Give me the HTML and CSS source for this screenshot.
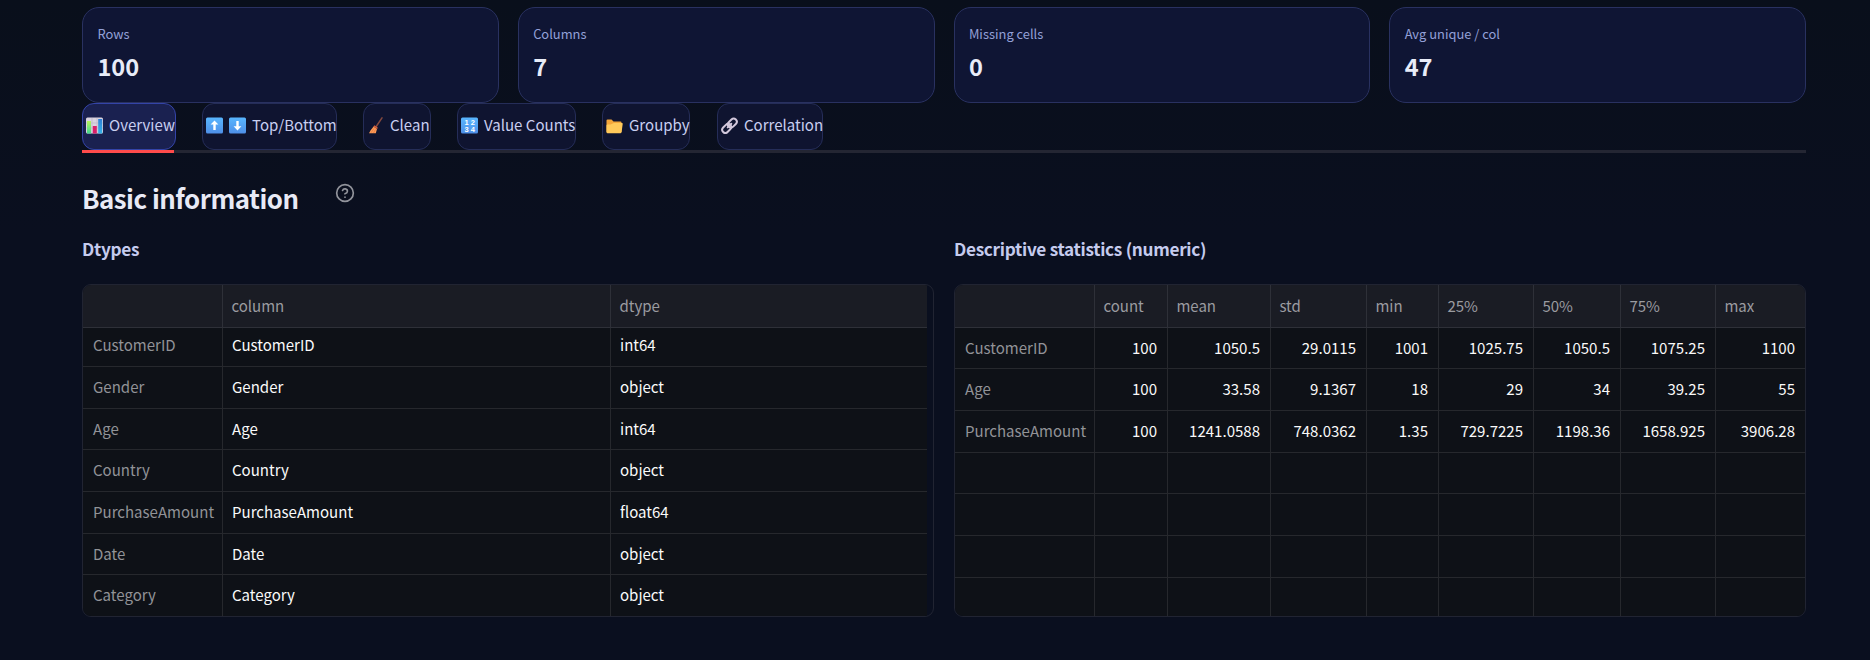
FILE: index.html
```html
<!DOCTYPE html>
<html lang="en">
<head>
<meta charset="utf-8">
<title>Data overview</title>
<link rel="stylesheet" href="styles.css">
</head>
<body>
<main class="page">
  <section class="metrics">
    <div class="metric"><div class="metric-label">Rows</div><div class="metric-value">100</div></div>
    <div class="metric"><div class="metric-label">Columns</div><div class="metric-value">7</div></div>
    <div class="metric"><div class="metric-label">Missing cells</div><div class="metric-value">0</div></div>
    <div class="metric"><div class="metric-label">Avg unique / col</div><div class="metric-value">47</div></div>
  </section>

  <nav class="tabs">
    <div class="tab active w-overview">
      <svg class="emoji" viewBox="0 0 17 17"><defs><linearGradient id="g" x2="0" y2="1"><stop stop-color="#b8f25a"/><stop offset="1" stop-color="#3fd98f"/></linearGradient><linearGradient id="b" x2="0" y2="1"><stop stop-color="#2f7fd6"/><stop offset="1" stop-color="#35b4ea"/></linearGradient><linearGradient id="k" x2="0" y2="1"><stop stop-color="#58b6ff"/><stop offset="1" stop-color="#4f8fe8"/></linearGradient></defs><rect y=".5" width="17" height="16" rx="1.5" fill="#d9d3e0"/><path d="M0 6h17M0 11h17M6 1v15M11 1v15" stroke="#b9b2c4" stroke-width=".6"/><rect x="1" y="4" width="4" height="12.5" fill="url(#g)"/><rect x="6.8" y="9" width="4" height="7.5" fill="#d91e68"/><rect x="12.2" y="2" width="4" height="14.5" fill="url(#b)"/></svg>
      <span>Overview</span></div>
    <div class="tab w-top">
      <svg class="emoji" viewBox="0 0 17 17"><rect y=".5" width="17" height="16" rx="1.5" fill="url(#k)"/><path d="M8.5 3.4 12.4 7.6H9.7V13H7.3V7.6H4.6z" fill="#fff"/></svg>
      <svg class="emoji second" viewBox="0 0 17 17"><rect y=".5" width="17" height="16" rx="1.5" fill="url(#k)"/><path d="M8.5 13.5 12.4 9.3H9.7V4H7.3V9.3H4.6z" fill="#fff"/></svg>
      <span>Top/Bottom</span></div>
    <div class="tab w-clean">
      <svg class="emoji" viewBox="0 0 17 17"><path d="M15 .8 9.200 9.500" stroke="#84493f" stroke-width="1.500" stroke-linecap="round"/><path d="M6.600 9.500 10 11.900 8.800 16.300 2 16.200 3.500 13.500z" fill="#ff9a55"/><path d="M4 15.800 7 11.500M6.500 16 8.500 12.500" stroke="#d9703f" stroke-width=".6"/><path d="M7.500 8.300 10.900 10.700 10.100 12 6.400 9.600z" fill="#d9603c"/></svg>
      <span>Clean</span></div>
    <div class="tab w-value">
      <svg class="emoji" viewBox="0 0 17 17"><rect y=".5" width="17" height="16" rx="1.5" fill="url(#k)"/><g class="digits"><text x="3.4" y="7.6">1</text><text x="9.8" y="7.6">2</text><text x="3.4" y="14.8">3</text><text x="9.8" y="14.8">4</text></g></svg>
      <span>Value Counts</span></div>
    <div class="tab w-group">
      <svg class="emoji" viewBox="0 0 17 17"><path d="M.5 3.5Q.5 2.5 1.5 2.5H5.5L7.5 4.500H14.500Q15.500 4.500 15.500 5.500V15H.5z" fill="#f3a63a"/><path d="M4.500 7.500 8 6H16Q16.900 6 16.700 7L15.600 15Q15.400 16.200 14.200 16.200H1.500Q.4 16.200.5 15V8.500Q.5 7.500 1.500 7.500z" fill="#ffc95a"/></svg>
      <span>Groupby</span></div>
    <div class="tab w-corr">
      <svg class="emoji" viewBox="0 0 17 17" fill="none" stroke="#d3c8dc" stroke-width="2"><rect x="6.3" y="3" width="10" height="6.2" rx="3.1" transform="rotate(-45 11.3 6.1)"/><rect x=".7" y="8.3" width="10" height="6.2" rx="3.1" transform="rotate(-45 5.7 11.4)"/><path d="M6.7 10.4 10.3 6.8" stroke-linecap="round"/></svg>
      <span>Correlation</span></div>
  </nav>
  <div class="track"><div class="track-active"></div></div>

  <header class="title-row">
    <h2 class="title">Basic information</h2>
    <svg class="help" viewBox="0 0 24 24" fill="none" stroke="#92949c" stroke-width="2" stroke-linecap="round" stroke-linejoin="round"><circle cx="12" cy="12" r="10"/><path d="M9.090 9a3 3 0 0 1 5.830 1c0 2-3 3-3 3M12 17h.01"/></svg>
  </header>

  <section class="panels">
    <div class="panel">
      <h4 class="subtitle">Dtypes</h4>
      <div class="frame">
        <div class="grid dtypes">
          <div class="row head"><span></span><span>column</span><span>dtype</span></div>
          <div class="row"><span>CustomerID</span><span>CustomerID</span><span>int64</span></div>
          <div class="row"><span>Gender</span><span>Gender</span><span>object</span></div>
          <div class="row"><span>Age</span><span>Age</span><span>int64</span></div>
          <div class="row"><span>Country</span><span>Country</span><span>object</span></div>
          <div class="row"><span>PurchaseAmount</span><span>PurchaseAmount</span><span>float64</span></div>
          <div class="row"><span>Date</span><span>Date</span><span>object</span></div>
          <div class="row"><span>Category</span><span>Category</span><span>object</span></div>
        </div>
      </div>
    </div>
    <div class="panel">
      <h4 class="subtitle">Descriptive statistics (numeric)</h4>
      <div class="frame">
        <div class="grid stats">
          <div class="row head"><span></span><span>count</span><span>mean</span><span>std</span><span>min</span><span>25%</span><span>50%</span><span>75%</span><span>max</span></div>
          <div class="row"><span>CustomerID</span><span>100</span><span>1050.5</span><span>29.0115</span><span>1001</span><span>1025.75</span><span>1050.5</span><span>1075.25</span><span>1100</span></div>
          <div class="row"><span>Age</span><span>100</span><span>33.58</span><span>9.1367</span><span>18</span><span>29</span><span>34</span><span>39.25</span><span>55</span></div>
          <div class="row"><span>PurchaseAmount</span><span>100</span><span>1241.0588</span><span>748.0362</span><span>1.35</span><span>729.7225</span><span>1198.36</span><span>1658.925</span><span>3906.28</span></div>
          <div class="row"><span></span><span></span><span></span><span></span><span></span><span></span><span></span><span></span><span></span></div>
          <div class="row"><span></span><span></span><span></span><span></span><span></span><span></span><span></span><span></span><span></span></div>
          <div class="row"><span></span><span></span><span></span><span></span><span></span><span></span><span></span><span></span><span></span></div>
          <div class="row"><span></span><span></span><span></span><span></span><span></span><span></span><span></span><span></span><span></span></div>
        </div>
      </div>
    </div>
  </section>
</main>
</body>
</html>
```
FILE: styles.css
```css
* { box-sizing: border-box; }
body {
  margin: 0;
  height: 660px;
  overflow: hidden;
  background: linear-gradient(#090f1b, #0a0f1f 35%, #0a0f1f);
  color: #e8eaf2;
  font-family: "Noto Sans CJK SC", "Noto Sans", sans-serif;
  font-size: 15.04px;
}
.page { padding: 7px 64px 0 82px; }

.metrics { display: grid; grid-template-columns: repeat(4, 1fr); gap: 19px; width: 1724px; }
.metric {
  height: 96px;
  padding: 16px 14px 0 14.4px;
  border: 1px solid #293160;
  border-radius: 17px;
  background: #0f1534;
}
.metric-label { font-size: 12.9px; line-height: 20px; color: #93a0d8; }
.metric-value { margin-top: 6px; font-size: 23.6px; line-height: 32px; font-weight: 700; color: #e8ecf8; }

.tabs { display: flex; gap: 26px; }
.tab {
  display: flex;
  align-items: center;
  height: 47px;
  padding-left: 3px;
  border: 1px solid #252d58;
  border-radius: 12px;
  background: #0f1430;
  color: #c9cff0;
  white-space: nowrap;
  line-height: 24px;
}
.tab span { margin: 0 0 4px 6px; }
.tab.active { background: #1a2150; border-color: #3444a8; }
.emoji { width: 17px; height: 17px; flex: none; margin-bottom: 3px; }
.emoji.second { margin-left: 6px; }
.digits { font: 700 7.5px "Liberation Sans", sans-serif; fill: #fff; }
.w-overview { width: 94px; }
.w-top { width: 135px; }
.w-clean { width: 68px; }
.w-value { width: 119px; }
.w-group { width: 88px; }
.w-corr { width: 106px; margin-left: 1px; }
.track { width: 1724px; height: 3px; background: #242633; }
.track-active { width: 92px; height: 3px; background: #ff4b4b; }

.title-row { display: flex; align-items: flex-start; padding-top: 25px; height: 79px; }
.title { margin: 0; width: 252.5px; font-size: 25.8px; line-height: 40px; letter-spacing: -.5px; font-weight: 600; color: #e8eaf6; }
.help { width: 20px; height: 20px; margin-top: 5px; }

.panels { display: flex; gap: 20px; }
.panel { width: 852px; }
.subtitle { margin: 0; padding-top: 4px; height: 52px; font-size: 17.2px; line-height: 26px; letter-spacing: -.3px; font-weight: 600; color: #c5cbee; }
.frame { height: 333px; overflow: hidden; border: 1px solid #212432; border-radius: 9px; }
.row { display: grid; }
.row span {
  display: flex;
  align-items: center;
  padding: 0 10px 2px 9px;
  background: #0e1117;
  border: 0 solid #26282d;
  border-width: 0 1px 1px 0;
  color: #fafafa;
}
.row span:first-child { color: #929397; padding-left: 10px; padding-right: 0; }
.row span:last-child { border-right: 0; }
.row:last-child span { border-bottom: 0; }
.row.head span { background: #1a1c24; border-color: #2e3038; color: #9a9ba0; padding-left: 8.4px; }

.dtypes { display: grid; grid-template-rows: 43px 39px 42px 41px 42px 42px 41px 41px; width: 844px; }
.dtypes .row { grid-template-columns: 140px 388px 1fr; }
.dtypes .row:nth-child(2) span { padding-bottom: 5px; }
.stats { display: grid; grid-template-rows: 43px 41px 42px 42px 41px 42px 42px 38px; }
.stats .row { grid-template-columns: 140px 73px 103px 96px 72px 95px 87px 95px 1fr; }
.stats .row:not(.head) span:not(:first-child) { justify-content: flex-end; }
```
